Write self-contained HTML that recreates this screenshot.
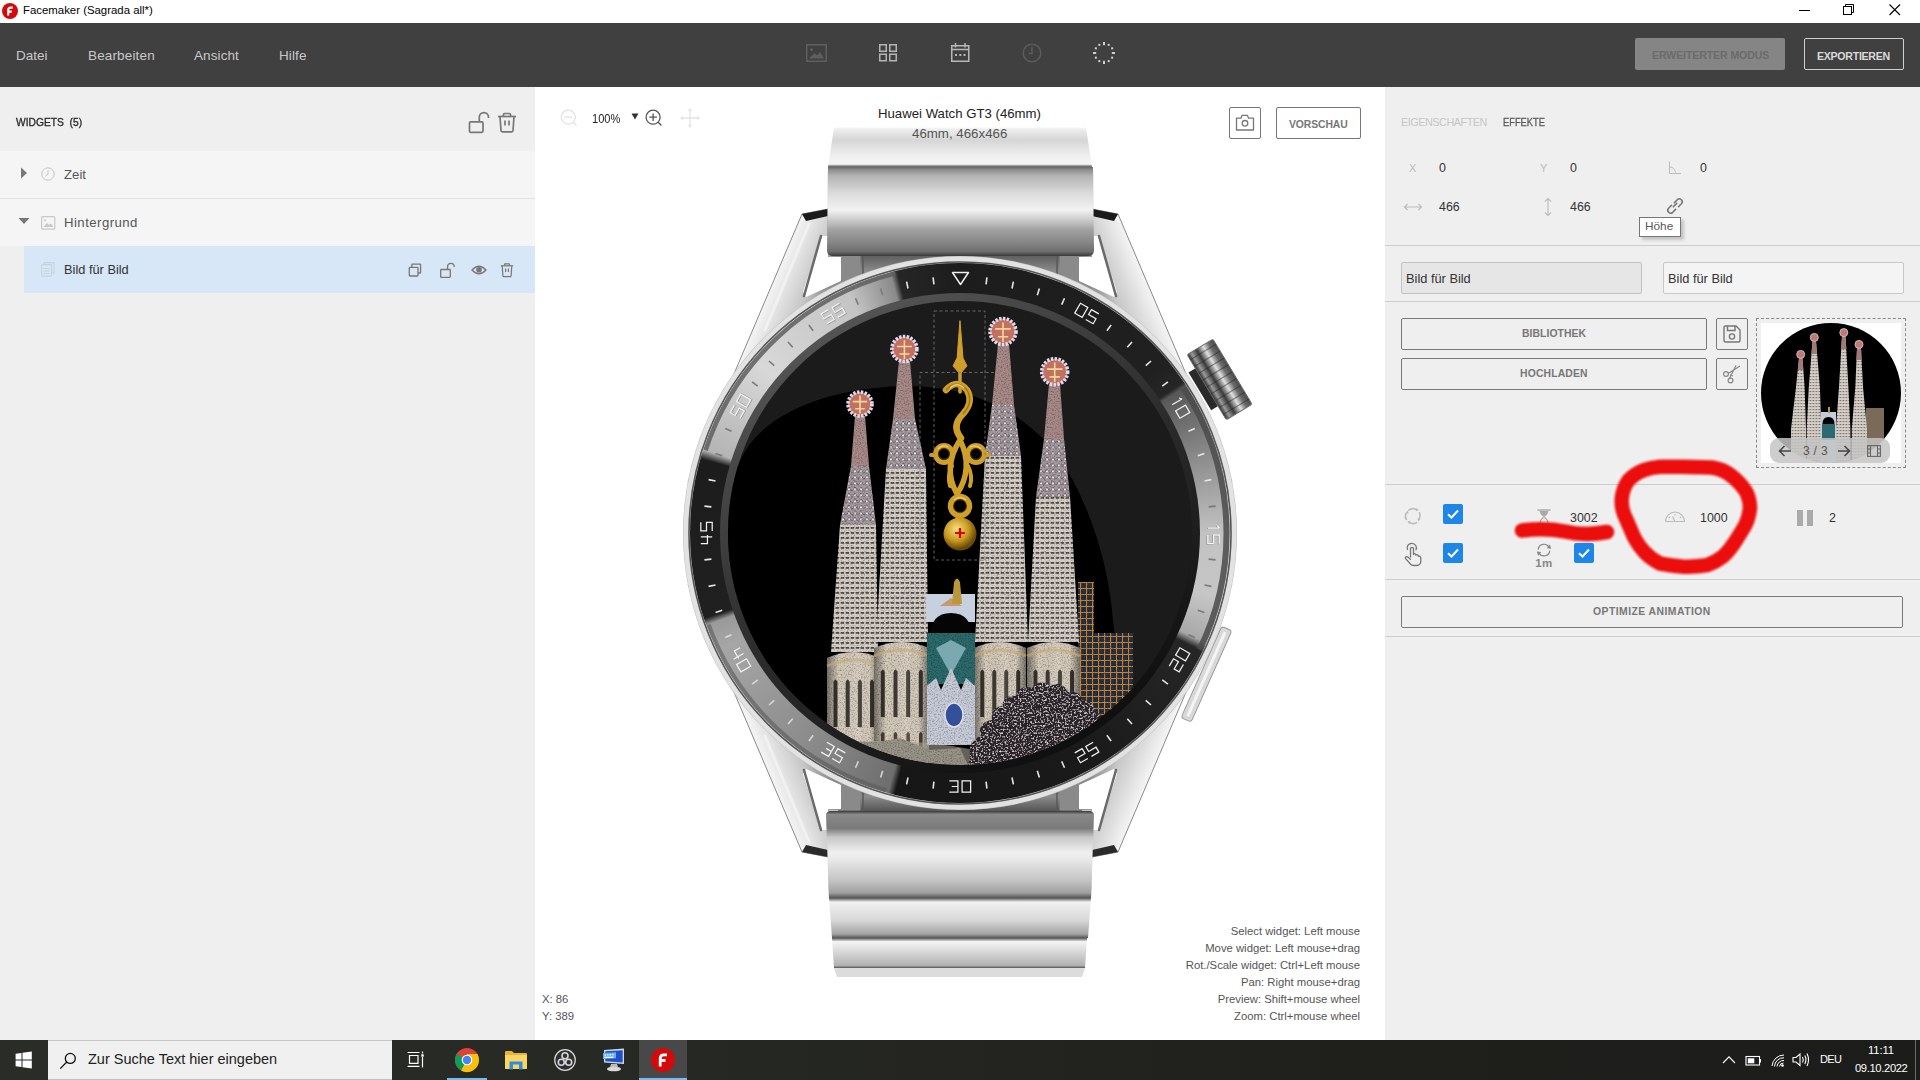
<!DOCTYPE html>
<html><head><meta charset="utf-8">
<style>
*{margin:0;padding:0;box-sizing:border-box}
html,body{width:1920px;height:1080px;overflow:hidden;background:#fff;font-family:"Liberation Sans",sans-serif}
.a{position:absolute}
.t{position:absolute;white-space:nowrap;line-height:1}
svg{position:absolute;overflow:visible}
</style></head><body>
<!-- title bar -->
<div class="a" style="left:0;top:0;width:1920px;height:23px;background:#fff"></div>
<svg style="left:2px;top:3px" width="16" height="16" viewBox="0 0 16 16"><circle cx="8" cy="8" r="8" fill="#d20a0a"/><path d="M6.2 12.6V7Q6.2 4.6 8.6 4.6H10.8M6.2 8.6H9.8" stroke="#fff" stroke-width="2.1" fill="none"/></svg>
<div class="t" style="left:23px;top:5px;font-size:11.4px;color:#000">Facemaker (Sagrada all*)</div>
<svg style="left:1799px;top:10px" width="12" height="2"><rect width="11" height="1" y="0" fill="#000"/></svg>
<svg style="left:1843px;top:4px" width="12" height="12" viewBox="0 0 12 12"><rect x="0.5" y="2.5" width="8" height="8" fill="none" stroke="#000"/><path d="M2.5 2.5V0.5H10.5V8.5H8.5" fill="none" stroke="#000"/></svg>
<svg style="left:1889px;top:4px" width="12" height="12" viewBox="0 0 12 12"><path d="M0.5 0.5L11 11M11 0.5L0.5 11" stroke="#000" stroke-width="1.1"/></svg>

<!-- menu bar -->
<div class="a" style="left:0;top:23px;width:1920px;height:64px;background:#404040"></div>
<div class="t" style="left:16px;top:48.5px;font-size:13.5px;color:#c9c9c9">Datei</div>
<div class="t" style="left:88px;top:48.5px;font-size:13.5px;color:#c9c9c9;letter-spacing:0.15px">Bearbeiten</div>
<div class="t" style="left:194px;top:48.5px;font-size:13.5px;color:#c9c9c9;letter-spacing:0.1px">Ansicht</div>
<div class="t" style="left:279px;top:48.5px;font-size:13.5px;color:#c9c9c9;letter-spacing:0.1px">Hilfe</div>
<!-- toolbar icons -->
<svg style="left:806px;top:44px" width="21" height="18" viewBox="0 0 21 18"><rect x="0.75" y="0.75" width="19.5" height="16.5" fill="none" stroke="#5e5e5e" stroke-width="1.5"/><circle cx="5.5" cy="5.5" r="1.5" fill="#5e5e5e"/><path d="M3 14.5L8.5 9L11 11.5L14 8L18 14.5Z" fill="#5e5e5e"/></svg>
<svg style="left:879px;top:44px" width="19" height="18" viewBox="0 0 19 18"><g fill="none" stroke="#b4b4b4" stroke-width="1.5"><rect x="0.75" y="0.75" width="6.5" height="6.5"/><rect x="10.75" y="0.75" width="6.5" height="6.5"/><rect x="0.75" y="10.25" width="6.5" height="6.5"/><rect x="10.75" y="10.25" width="6.5" height="6.5"/></g></svg>
<svg style="left:951px;top:43px" width="19" height="19" viewBox="0 0 19 19"><g fill="none" stroke="#b8b8b8" stroke-width="1.5"><rect x="0.75" y="2.75" width="17" height="15.5"/><path d="M4.5 0V4.5M14 0V4.5M0.75 6.5H17.75"/></g><g fill="#b8b8b8"><rect x="4" y="11" width="2" height="2"/><rect x="8.3" y="11" width="2" height="2"/><rect x="12.5" y="11" width="2" height="2"/></g></svg>
<svg style="left:1022px;top:43px" width="20" height="20" viewBox="0 0 20 20"><circle cx="10" cy="10" r="8.8" fill="none" stroke="#5c5c5c" stroke-width="1.5"/><path d="M10 4V10.5H6.5" fill="none" stroke="#5c5c5c" stroke-width="1.5"/></svg>
<svg style="left:1093px;top:42px" width="22" height="22" viewBox="0 0 22 22"><g fill="#cfcfcf"><rect x="10.00" y="-0.00" width="2.0" height="3.2"/><rect x="14.70" y="1.86" width="2.0" height="2.0"/><rect x="18.14" y="5.30" width="2.0" height="2.0"/><rect x="18.80" y="10.00" width="3.2" height="2.0"/><rect x="18.14" y="14.70" width="2.0" height="2.0"/><rect x="14.70" y="18.14" width="2.0" height="2.0"/><rect x="10.00" y="18.80" width="2.0" height="3.2"/><rect x="5.30" y="18.14" width="2.0" height="2.0"/><rect x="1.86" y="14.70" width="2.0" height="2.0"/><rect x="-0.00" y="10.00" width="3.2" height="2.0"/><rect x="1.86" y="5.30" width="2.0" height="2.0"/><rect x="5.30" y="1.86" width="2.0" height="2.0"/></g></svg>
<!-- header buttons -->
<div class="a" style="left:1635px;top:38px;width:150px;height:32px;background:#858585;border-radius:2px"></div>
<div class="t" style="left:1652px;top:50px;font-size:10.6px;font-weight:bold;color:#6b6b6b;letter-spacing:-0.12px">ERWEITERTER MODUS</div>
<div class="a" style="left:1804px;top:38px;width:100px;height:32px;border:1.5px solid #cfcfcf;border-radius:2px"></div>
<div class="t" style="left:1817px;top:51px;font-size:10.6px;font-weight:bold;color:#dadada;letter-spacing:-0.28px">EXPORTIEREN</div>

<!-- panels -->
<div class="a" style="left:0;top:87px;width:535px;height:953px;background:#efefef"></div>
<div class="a" style="left:535px;top:87px;width:850px;height:953px;background:#fff"></div>
<div class="a" style="left:1385px;top:87px;width:535px;height:953px;background:#efefef"></div>

<!-- left panel -->
<div class="t" style="left:16px;top:116.5px;font-size:11.8px;color:#2a2a2a;-webkit-text-stroke:0.35px #2a2a2a;transform:scaleX(0.87);transform-origin:0 0">WIDGETS&nbsp;&nbsp;(5)</div>
<svg style="left:467px;top:111px" width="24" height="24" viewBox="0 0 24 24"><g fill="none" stroke="#777" stroke-width="1.7"><rect x="2.5" y="10.8" width="13.5" height="10.5" rx="1.2"/><path d="M12.3 10.8V6.2A4.6 4.6 0 0 1 21.5 6.2V7"/></g></svg>
<svg style="left:497px;top:112px" width="20" height="22" viewBox="0 0 20 22"><g fill="none" stroke="#777" stroke-width="1.7"><path d="M1 4.5H19"/><path d="M6.5 4.5V2.5Q6.5 1.5 7.5 1.5H12.5Q13.5 1.5 13.5 2.5V4.5"/><path d="M3 4.5L4 18.5Q4 19.8 5.3 19.8H14.7Q16 19.8 16 18.5L17 4.5"/><path d="M8 8.5V13.5M12 8.5V13.5"/></g></svg>
<div class="a" style="left:0;top:151px;width:535px;height:47px;background:#f5f5f5"></div>
<div class="a" style="left:0;top:198px;width:535px;height:1px;background:#e2e2e2"></div>
<div class="a" style="left:0;top:199px;width:535px;height:47px;background:#f5f5f5"></div>
<div class="a" style="left:24px;top:246px;width:511px;height:47px;background:#d7e7f7"></div>
<svg style="left:20px;top:167px" width="8" height="12" viewBox="0 0 8 12"><path d="M1 0.5L7 6L1 11.5Z" fill="#777"/></svg>
<svg style="left:18px;top:217px" width="12" height="8" viewBox="0 0 12 8"><path d="M0.5 1L11.5 1L6 7Z" fill="#777"/></svg>
<svg style="left:41px;top:167px" width="14" height="14" viewBox="0 0 14 14"><circle cx="7" cy="7" r="6.2" fill="none" stroke="#c4c4c4" stroke-width="1"/><path d="M7 3V7.3L4.5 9" fill="none" stroke="#c4c4c4" stroke-width="1"/></svg>
<svg style="left:41px;top:216px" width="15" height="14" viewBox="0 0 15 14"><rect x="0.6" y="0.6" width="13.2" height="12.6" rx="1" fill="none" stroke="#c8c8c8" stroke-width="1.2"/><path d="M2.5 11L6 7L8 9L10 7.5L12.5 11Z" fill="#c8c8c8"/><circle cx="4" cy="4.2" r="1" fill="#c8c8c8"/></svg>
<svg style="left:41px;top:262px" width="15" height="15" viewBox="0 0 15 15"><g fill="none" stroke="#c8d3de" stroke-width="1.1"><rect x="0.6" y="2.6" width="10" height="11.5" rx="0.8"/><path d="M3 2.6V0.6H13V11H10.6"/><path d="M5.5 0.6V-0M2.5 6.5H8.5M2.5 9H8.5M2.5 11.5H8.5"/></g></svg>
<div class="t" style="left:64px;top:168px;font-size:13.2px;color:#555">Zeit</div>
<div class="t" style="left:64px;top:216px;font-size:13.2px;color:#555;letter-spacing:0.45px">Hintergrund</div>
<div class="t" style="left:64px;top:263.5px;font-size:12.8px;color:#333">Bild für Bild</div>
<!-- row icons -->
<svg style="left:408px;top:263px" width="14" height="14" viewBox="0 0 14 14"><g fill="none" stroke="#777" stroke-width="1.3"><rect x="1.3" y="4.3" width="8.7" height="8.7" rx="0.8"/><path d="M3.8 4.3V1.8Q3.8 1.1 4.5 1.1H12Q12.6 1.1 12.6 1.8V9.3Q12.6 10 12 10H10"/></g></svg>
<svg style="left:439px;top:262px" width="17" height="17" viewBox="0 0 17 17"><g fill="none" stroke="#777" stroke-width="1.3"><rect x="1.7" y="7.5" width="9.6" height="7.9" rx="0.8"/><path d="M8.6 7.5V4.6A3.3 3.3 0 0 1 15.2 4.6V5"/></g></svg>
<svg style="left:471px;top:264px" width="16" height="12" viewBox="0 0 16 12"><path d="M1 6Q8 -1.5 15 6Q8 13.5 1 6Z" fill="none" stroke="#777" stroke-width="1.3"/><circle cx="8" cy="5.8" r="2.8" fill="#777"/></svg>
<svg style="left:500px;top:263px" width="14" height="15" viewBox="0 0 14 15"><g fill="none" stroke="#777" stroke-width="1.2"><path d="M0.8 2.8H13.2"/><path d="M4.5 2.8V1.4Q4.5 0.8 5.1 0.8H8.9Q9.5 0.8 9.5 1.4V2.8"/><path d="M2.2 2.8L2.9 12.8Q2.9 13.6 3.7 13.6H10.3Q11.1 13.6 11.1 12.8L11.8 2.8"/><path d="M5.6 5.5V9M8.4 5.5V9"/></g></svg>

<!-- canvas tools -->
<svg style="left:559px;top:108px" width="20" height="20" viewBox="0 0 20 20"><g fill="none" stroke="#e2e2e2" stroke-width="1.3"><circle cx="9.3" cy="9.2" r="7"/><path d="M5.5 9.2H13M14.3 14.3L17.5 17.5"/></g></svg>
<div class="t" style="left:592px;top:112.5px;font-size:12.3px;color:#222;transform:scaleX(0.9);transform-origin:0 0">100%</div>
<svg style="left:631px;top:113px" width="8" height="7" viewBox="0 0 8 7"><path d="M0.5 0.5H7.5L4 6.5Z" fill="#333"/></svg>
<svg style="left:644px;top:108px" width="20" height="20" viewBox="0 0 20 20"><g fill="none" stroke="#555" stroke-width="1.3"><circle cx="9.1" cy="9.2" r="7"/><path d="M5.3 9.2H12.9M9.1 5.4V13M14.2 14.3L17.4 17.5"/></g></svg>
<svg style="left:680px;top:108px" width="20" height="20" viewBox="0 0 20 20"><g fill="none" stroke="#e4e4e4" stroke-width="1.3"><path d="M10 1V19M1 10H19"/></g><g fill="#e4e4e4"><path d="M10 0L12.2 3H7.8Z"/><path d="M10 20L12.2 17H7.8Z"/><path d="M0 10L3 7.8V12.2Z"/><path d="M20 10L17 7.8V12.2Z"/></g></svg>
<div class="a" style="left:1229px;top:107px;width:32px;height:32px;border:1.3px solid #777;border-radius:2px"></div>
<svg style="left:1235px;top:113px" width="20" height="20" viewBox="0 0 20 20"><g fill="none" stroke="#777" stroke-width="1.3"><path d="M1.5 5.2H6L7 2.4H12.5L13.5 5.2H18.5V17H1.5Z" stroke-linejoin="round"/><circle cx="10" cy="10.3" r="2.8"/></g></svg>
<div class="a" style="left:1276px;top:107px;width:85px;height:32px;border:1.3px solid #777;border-radius:2px"></div>
<div class="t" style="left:1289px;top:119.5px;font-size:10.4px;font-weight:bold;color:#777;letter-spacing:-0.1px">VORSCHAU</div>
<!-- help text -->
<div class="a" style="left:1060px;top:922.5px;width:300px;text-align:right;font-size:11.3px;line-height:17px;color:#555">Select widget: Left mouse<br>Move widget: Left mouse+drag<br>Rot./Scale widget: Ctrl+Left mouse<br>Pan: Right mouse+drag<br>Preview: Shift+mouse wheel<br>Zoom: Ctrl+mouse wheel</div>
<div class="a" style="left:542px;top:990.5px;font-size:11.3px;line-height:17px;color:#555">X: 86<br>Y: 389</div>

<svg style="left:0;top:0" width="1920" height="1080" viewBox="0 0 1920 1080">
<defs>
<linearGradient id="bt1" x1="0" y1="0" x2="0" y2="1">
 <stop offset="0" stop-color="#f6f6f6"/><stop offset="0.06" stop-color="#ececec"/><stop offset="0.32" stop-color="#d6d6d6"/><stop offset="0.7" stop-color="#eeeeee"/><stop offset="0.93" stop-color="#f6f6f6"/><stop offset="0.965" stop-color="#9a9a9a"/><stop offset="1" stop-color="#5a5a5a"/></linearGradient>
<linearGradient id="bt2" x1="0" y1="0" x2="0" y2="1">
 <stop offset="0" stop-color="#6a6a6a"/><stop offset="0.03" stop-color="#8c8c8c"/><stop offset="0.1" stop-color="#b4b4b4"/><stop offset="0.2" stop-color="#c8c8c8"/><stop offset="0.3" stop-color="#dcdcdc"/><stop offset="0.48" stop-color="#f2f2f2"/><stop offset="0.58" stop-color="#d0d0d0"/><stop offset="0.71" stop-color="#a0a0a0"/><stop offset="0.83" stop-color="#8a8a8a"/><stop offset="0.95" stop-color="#6e6e6e"/><stop offset="1" stop-color="#3a3a3a"/></linearGradient>
<linearGradient id="bb1" x1="0" y1="0" x2="0" y2="1">
 <stop offset="0" stop-color="#3a3a3a"/><stop offset="0.04" stop-color="#8a8a8a"/><stop offset="0.2" stop-color="#7a7a7a"/><stop offset="0.3" stop-color="#c8c8c8"/><stop offset="0.48" stop-color="#f0f0f0"/><stop offset="0.56" stop-color="#e8e8e8"/><stop offset="0.8" stop-color="#c4c4c4"/><stop offset="0.94" stop-color="#a0a0a0"/><stop offset="1" stop-color="#555555"/></linearGradient>
<linearGradient id="bb2" x1="0" y1="0" x2="0" y2="1">
 <stop offset="0" stop-color="#555555"/><stop offset="0.1" stop-color="#f0f0f0"/><stop offset="0.55" stop-color="#d8d8d8"/><stop offset="0.9" stop-color="#a4a4a4"/><stop offset="1" stop-color="#555555"/></linearGradient>
<linearGradient id="bb3" x1="0" y1="0" x2="0" y2="1">
 <stop offset="0" stop-color="#555555"/><stop offset="0.12" stop-color="#f4f4f4"/><stop offset="0.7" stop-color="#c4c4c4"/><stop offset="0.92" stop-color="#b0b0b0"/><stop offset="1" stop-color="#555555"/></linearGradient>
<linearGradient id="link" x1="0" y1="0" x2="0" y2="1">
 <stop offset="0" stop-color="#5a5a5a"/><stop offset="0.45" stop-color="#8c8c8c"/><stop offset="1" stop-color="#4a4a4a"/></linearGradient>
<linearGradient id="lugTL" gradientUnits="userSpaceOnUse" x1="745" y1="350" x2="795" y2="371"><stop offset="0" stop-color="#f4f4f4"/><stop offset="0.2" stop-color="#e6e6e6"/><stop offset="0.65" stop-color="#c6c6c6"/><stop offset="1" stop-color="#8a8a8a"/></linearGradient>
<linearGradient id="lugTR" gradientUnits="userSpaceOnUse" x1="1175" y1="350" x2="1125" y2="371"><stop offset="0" stop-color="#f4f4f4"/><stop offset="0.2" stop-color="#e6e6e6"/><stop offset="0.65" stop-color="#c6c6c6"/><stop offset="1" stop-color="#8a8a8a"/></linearGradient>
<linearGradient id="lugBL" gradientUnits="userSpaceOnUse" x1="745" y1="716" x2="795" y2="695"><stop offset="0" stop-color="#f4f4f4"/><stop offset="0.2" stop-color="#e6e6e6"/><stop offset="0.65" stop-color="#c6c6c6"/><stop offset="1" stop-color="#8a8a8a"/></linearGradient>
<linearGradient id="lugBR" gradientUnits="userSpaceOnUse" x1="1175" y1="716" x2="1125" y2="695"><stop offset="0" stop-color="#f4f4f4"/><stop offset="0.2" stop-color="#e6e6e6"/><stop offset="0.65" stop-color="#c6c6c6"/><stop offset="1" stop-color="#8a8a8a"/></linearGradient>
<radialGradient id="caseg" cx="0.5" cy="0.5" r="0.5">
 <stop offset="0.9" stop-color="#c8c8c8"/><stop offset="0.97" stop-color="#ededed"/><stop offset="1" stop-color="#bdbdbd"/></radialGradient>
<pattern id="brush" width="3" height="40" patternUnits="userSpaceOnUse"><rect width="1" height="40" fill="#000" opacity="0.035"/></pattern>
<clipPath id="canvclip"><rect x="535" y="87" width="850" height="953"/></clipPath>
</defs>
<g clip-path="url(#canvclip)">
<rect x="840" y="254" width="240" height="40" fill="url(#link)"/>
<rect x="838" y="782" width="244" height="32" fill="url(#link)"/>
<path d="M863 256V300M1057 256V300M863 770V814M1057 770V814" stroke="#5a5a5a" stroke-width="1.5"/>
<path d="M834 127.5H1086L1092 167H828Z" fill="url(#bt1)"/>
<path d="M828 167H1093L1094 250Q1094 256 1088 256H833Q827 256 827 250Z" fill="url(#bt2)"/>
<path d="M826 815Q826 811 832 811H1088Q1094 811 1094 815L1091 898H829Z" fill="url(#bb1)"/>
<path d="M829 898H1091L1088 938H832Z" fill="url(#bb2)"/>
<path d="M832 938H1087L1085 968H834Z" fill="url(#bb3)"/>
<path d="M834 968H1085L1082 977H837Z" fill="#dcdcdc"/>
<path d="M802 214 L828 209 L828 256 L860 256 L860 300 L760 420 L688 482Z" fill="url(#lugTL)" stroke="#8a8a8a" stroke-width="1"/>
<path d="M821 236 L828 236 L828 257 L841 257 L841 281 L806 297 L803 292Z" fill="#fff"/>
<path d="M1118 214 L1092 209 L1092 256 L1060 256 L1060 300 L1160 420 L1232 482Z" fill="url(#lugTR)" stroke="#8a8a8a" stroke-width="1"/>
<path d="M1099 236 L1092 236 L1092 257 L1079 257 L1079 281 L1114 297 L1117 292Z" fill="#fff"/>
<path d="M802 852 L828 857 L828 810 L860 810 L860 766 L760 646 L688 584Z" fill="url(#lugBL)" stroke="#8a8a8a" stroke-width="1"/>
<path d="M821 830 L828 830 L828 809 L841 809 L841 785 L806 769 L803 774Z" fill="#fff"/>
<path d="M1118 852 L1092 857 L1092 810 L1060 810 L1060 766 L1160 646 L1232 584Z" fill="url(#lugBR)" stroke="#8a8a8a" stroke-width="1"/>
<path d="M1099 830 L1092 830 L1092 809 L1079 809 L1079 785 L1114 769 L1117 774Z" fill="#fff"/>
<g fill="none" stroke-linecap="round"><path d="M821 236L804 296" stroke="#6a6a6a" stroke-width="2.5"/><path d="M1099 236L1116 296" stroke="#6a6a6a" stroke-width="2.5"/><path d="M821 830L804 770" stroke="#6a6a6a" stroke-width="2.5"/><path d="M1099 830L1116 770" stroke="#6a6a6a" stroke-width="2.5"/><path d="M809 224L765 330" stroke="#f4f4f4" stroke-width="3" opacity="0.8"/><path d="M809 842L765 736" stroke="#f4f4f4" stroke-width="3" opacity="0.8"/></g>
<path d="M802 214L828 209V216L806 221Z" fill="#1a1a1a"/><path d="M1118 214L1092 209V216L1114 221Z" fill="#1a1a1a"/>
<path d="M802 852L828 857V850L806 845Z" fill="#2a2a2a"/><path d="M1118 852L1092 857V850L1114 845Z" fill="#2a2a2a"/>
<path d="M828 167H1093L1094 250Q1094 256 1088 256H833Q827 256 827 250Z" fill="url(#bt2)"/>
<path d="M826 815Q826 811 832 811H1088Q1094 811 1094 815L1091 898H829Z" fill="url(#bb1)"/>
<g transform="translate(1217 381) rotate(-31)"><defs><linearGradient id="crg" x1="0" y1="0" x2="1" y2="0"><stop offset="0" stop-color="#2a2a2a"/><stop offset="0.15" stop-color="#9a9a9a"/><stop offset="0.35" stop-color="#3a3a3a"/><stop offset="0.6" stop-color="#e0e0e0"/><stop offset="0.8" stop-color="#6a6a6a"/><stop offset="1" stop-color="#4a4a4a"/></linearGradient></defs><rect x="-20" y="-22" width="10" height="44" fill="#2a2a2a"/><rect x="-12" y="-38" width="30" height="76" rx="2" fill="url(#crg)" stroke="#6a6a6a" stroke-width="1"/><path d="M-12 -32H18M-12 -24H18M-12 -16H18M-12 -8H18M-12 0H18M-12 8H18M-12 16H18M-12 24H18M-12 32H18" stroke="#222" stroke-width="1.2" opacity="0.45"/></g>
<g transform="translate(1206 674) rotate(24)"><rect x="-5" y="-50" width="11" height="100" rx="3" fill="#d8d8d8" stroke="#9a9a9a" stroke-width="1"/><rect x="-1" y="-46" width="3" height="92" fill="#f4f4f4"/></g>
<circle cx="960" cy="533" r="277" fill="url(#caseg)"/>
<circle cx="960" cy="533" r="274" fill="none" stroke="#e2e2e2" stroke-width="5"/><circle cx="960" cy="533" r="271" fill="none" stroke="#555" stroke-width="1.6"/>
</g></svg>
<div class="a" style="left:690px;top:263px;width:540px;height:540px;border-radius:50%;background:conic-gradient(from 0deg,#1c1c1c 0deg,#202020 50deg,#262626 56deg,#585858 57deg,#8a8a8a 72deg,#c2c2c2 90deg,#c6c6c6 104deg,#a8a8a8 114deg,#262626 116deg,#1a1a1a 150deg,#161616 194deg,#6e6e6e 195.5deg,#8a8a8a 215deg,#a6a6a6 244deg,#9a9a9a 250deg,#202020 251.5deg,#1c1c1c 286deg,#b4b4b4 288deg,#d8d8d8 310deg,#c4c4c4 335deg,#8a8a8a 345deg,#262626 346.5deg,#1c1c1c 360deg)"></div>
<svg style="left:0;top:0" width="1920" height="1080" viewBox="0 0 1920 1080">
<defs>
<linearGradient id="ring" x1="0.2" y1="0" x2="0.8" y2="1">
 <stop offset="0" stop-color="#5a5a5a"/><stop offset="0.45" stop-color="#303030"/><stop offset="1" stop-color="#0a0a0a"/></linearGradient>
<clipPath id="face"><circle cx="960" cy="533" r="232"/></clipPath>
<pattern id="win" width="6" height="6" patternUnits="userSpaceOnUse"><rect width="6" height="6" fill="#d0c8c0"/><rect x="1" y="2.5" width="3.5" height="1.6" fill="#4a4242"/></pattern>
<pattern id="louv" width="5" height="5" patternUnits="userSpaceOnUse"><rect width="5" height="5" fill="#d6d0c8"/><rect x="0.7" y="2.1" width="3.4" height="1.6" fill="#4a4242"/></pattern><pattern id="spiky" width="6" height="6" patternUnits="userSpaceOnUse"><rect width="6" height="6" fill="#a89ca0"/><circle cx="3" cy="3" r="1.3" fill="#e8e8f4"/><path d="M0 5.5L3 1L6 5.5" stroke="#706468" stroke-width="0.8" fill="none"/></pattern>
<pattern id="tower" width="13" height="44" patternUnits="userSpaceOnUse" x="2" y="6"><rect width="13" height="44" fill="#d4cabb"/><rect x="5" y="6" width="3" height="28" rx="1.5" fill="#4a4440"/></pattern>
<pattern id="tree" width="5" height="5" patternUnits="userSpaceOnUse"><rect width="5" height="5" fill="#3a3238"/><circle cx="1.5" cy="1.5" r="1.3" fill="#d8d0d8"/><circle cx="3.8" cy="3.6" r="1" fill="#a8a0a8"/></pattern>
<pattern id="scaf" width="6" height="6" patternUnits="userSpaceOnUse"><rect width="6" height="6" fill="#2a3040"/><path d="M0 0.5H6M0.5 0V6" stroke="#c8883a" stroke-width="1.2"/></pattern>
<filter id="tex" x="0" y="0" width="1" height="1"><feTurbulence type="fractalNoise" baseFrequency="0.7" numOctaves="2" seed="5" result="n"/><feColorMatrix in="n" type="matrix" values="0 0 0 0 0  0 0 0 0 0  0 0 0 0 0  1.4 0 0 0 -0.6" result="na"/><feComposite in="na" in2="SourceGraphic" operator="in" result="nb"/><feMerge><feMergeNode in="SourceGraphic"/><feMergeNode in="nb"/></feMerge></filter>
<linearGradient id="cyl" x1="0" y1="0" x2="1" y2="0"><stop offset="0" stop-color="#000" stop-opacity="0.45"/><stop offset="0.22" stop-color="#000" stop-opacity="0"/><stop offset="0.6" stop-color="#fff" stop-opacity="0.1"/><stop offset="0.8" stop-color="#000" stop-opacity="0"/><stop offset="1" stop-color="#000" stop-opacity="0.45"/></linearGradient>
<filter id="speck" x="0" y="0" width="1" height="1"><feTurbulence type="fractalNoise" baseFrequency="0.55" numOctaves="3" seed="11" result="n"/><feColorMatrix in="n" type="matrix" values="0 0 0 0 0.86  0 0 0 0 0.84  0 0 0 0 0.88  2.8 0 0 0 -1.45" result="na"/><feComposite in="na" in2="SourceGraphic" operator="in" result="nb"/><feMerge><feMergeNode in="SourceGraphic"/><feMergeNode in="nb"/></feMerge></filter>
<radialGradient id="ball" cx="0.4" cy="0.35" r="0.6"><stop offset="0" stop-color="#f8e080"/><stop offset="0.6" stop-color="#c89820"/><stop offset="1" stop-color="#6a4a08"/></radialGradient>
<linearGradient id="spireg" x1="0" y1="0" x2="0" y2="1"><stop offset="0" stop-color="#7a5050" stop-opacity="0.6"/><stop offset="0.3" stop-color="#8a6a6a" stop-opacity="0.45"/><stop offset="0.55" stop-color="#9a8a8a" stop-opacity="0.15"/><stop offset="0.75" stop-color="#b0a8a0" stop-opacity="0"/></linearGradient>
</defs>
<path d="M1183.5 387.9A266.5 266.5 0 0 1 1199.5 649.8" fill="none" stroke="#4a4a4a" stroke-width="6" opacity="0.85"/>
<path d="M705.6 450.3A267.5 267.5 0 0 1 895.3 273.4" fill="none" stroke="#5e5e5e" stroke-width="4.5" opacity="0.85"/>
<path d="M886.3 790.1A267.5 267.5 0 0 1 708.6 624.5" fill="none" stroke="#5a5a5a" stroke-width="4" opacity="0.6"/>
<circle cx="960" cy="533" r="240" fill="url(#ring)"/>
<circle cx="960" cy="533" r="232" fill="#1b1b1b"/>
<g clip-path="url(#face)">
<path d="M738 466C758 412 830 389 900 386C980 384 1040 420 1070 475C1095 520 1108 570 1112 610C1115 650 1125 680 1140 700L1220 720V820H700V466Z" fill="#000"/>
<path d="M1078 582H1094V760H1078Z" fill="url(#scaf)" filter="url(#tex)"/><path d="M1090 633H1133V716H1090Z" fill="url(#scaf)" filter="url(#tex)"/>
<path d="M827 658Q853.5 646 880 658V780H827Z" fill="#d6ccbc" filter="url(#tex)"/>
<path d="M833.5 727V682Q835.5 677 837.5 682V727Z" fill="#3a3430"/>
<path d="M833.7 782V744Q835.5 740 837.3 744V782Z" fill="#4a4038"/>
<path d="M845.7 727V682Q847.7 677 849.7 682V727Z" fill="#3a3430"/>
<path d="M845.9 782V744Q847.7 740 849.5 744V782Z" fill="#4a4038"/>
<path d="M857.9 727V682Q859.9 677 861.9 682V727Z" fill="#3a3430"/>
<path d="M858.1 782V744Q859.9 740 861.7 744V782Z" fill="#4a4038"/>
<path d="M870.0 727V682Q872.0 677 874.0 682V727Z" fill="#3a3430"/>
<path d="M870.2 782V744Q872.0 740 873.8 744V782Z" fill="#4a4038"/>
<path d="M827 658Q853.5 646 880 658V780H827Z" fill="url(#cyl)"/>
<path d="M827 666Q853.5 654 880 666" fill="none" stroke="#c8a870" stroke-width="3" opacity="0.6"/>
<path d="M840 525 L876 525 L878 652 L831 652Z" fill="url(#louv)" filter="url(#tex)"/>
<path d="M851 466 L869 466 L876 525 L840 525Z" fill="url(#spiky)" filter="url(#tex)"/>
<path d="M855 416 L865 416 L869 466 L851 466Z" fill="#a88a88" filter="url(#tex)"/>
<circle cx="860" cy="404" r="12" fill="#c27060" stroke="#dcdcf4" stroke-width="3.6" stroke-dasharray="2.4 1.4"/>
<path d="M852.8 401.6L867.2 401.6M860 395.6L860 413.6M855.2 408.8L864.8 408.8" stroke="#f0d8a0" stroke-width="1.6"/>
<path d="M874 648Q901.5 636 929 648V780H874Z" fill="#d6ccbc" filter="url(#tex)"/>
<path d="M880.8 717V672Q882.8 667 884.8 672V717Z" fill="#3a3430"/>
<path d="M881.0 772V734Q882.8 730 884.6 734V772Z" fill="#4a4038"/>
<path d="M893.5 717V672Q895.5 667 897.5 672V717Z" fill="#3a3430"/>
<path d="M893.7 772V734Q895.5 730 897.2 734V772Z" fill="#4a4038"/>
<path d="M906.1 717V672Q908.1 667 910.1 672V717Z" fill="#3a3430"/>
<path d="M906.3 772V734Q908.1 730 909.9 734V772Z" fill="#4a4038"/>
<path d="M918.8 717V672Q920.8 667 922.8 672V717Z" fill="#3a3430"/>
<path d="M919.0 772V734Q920.8 730 922.5 734V772Z" fill="#4a4038"/>
<path d="M874 648Q901.5 636 929 648V780H874Z" fill="url(#cyl)"/>
<path d="M874 656Q901.5 644 929 656" fill="none" stroke="#c8a870" stroke-width="3" opacity="0.6"/>
<path d="M886 469 L926 469 L928 642 L876 642Z" fill="url(#louv)" filter="url(#tex)"/>
<path d="M893 419 L915 419 L926 469 L886 469Z" fill="url(#spiky)" filter="url(#tex)"/>
<path d="M899 361 L910 361 L915 419 L893 419Z" fill="#a88a88" filter="url(#tex)"/>
<circle cx="904.4" cy="349" r="12.5" fill="#c27060" stroke="#dcdcf4" stroke-width="3.6" stroke-dasharray="2.4 1.4"/>
<path d="M896.9 346.5L911.9 346.5M904.4 340.25L904.4 359M899.4 354L909.4 354" stroke="#f0d8a0" stroke-width="1.6"/>
<path d="M974 648Q1000 636 1026 648V780H974Z" fill="#d6ccbc" filter="url(#tex)"/>
<path d="M980.3 717V672Q982.3 667 984.3 672V717Z" fill="#3a3430"/>
<path d="M980.5 772V734Q982.3 730 984.1 734V772Z" fill="#4a4038"/>
<path d="M992.3 717V672Q994.3 667 996.3 672V717Z" fill="#3a3430"/>
<path d="M992.5 772V734Q994.3 730 996.1 734V772Z" fill="#4a4038"/>
<path d="M1004.2 717V672Q1006.2 667 1008.2 672V717Z" fill="#3a3430"/>
<path d="M1004.4 772V734Q1006.2 730 1008.0 734V772Z" fill="#4a4038"/>
<path d="M1016.2 717V672Q1018.2 667 1020.2 672V717Z" fill="#3a3430"/>
<path d="M1016.4 772V734Q1018.2 730 1020.0 734V772Z" fill="#4a4038"/>
<path d="M974 648Q1000 636 1026 648V780H974Z" fill="url(#cyl)"/>
<path d="M974 656Q1000 644 1026 656" fill="none" stroke="#c8a870" stroke-width="3" opacity="0.6"/>
<path d="M985 456 L1021 456 L1028 642 L975 642Z" fill="url(#louv)" filter="url(#tex)"/>
<path d="M992 405 L1014 405 L1021 456 L985 456Z" fill="url(#spiky)" filter="url(#tex)"/>
<path d="M998 344 L1009 344 L1014 405 L992 405Z" fill="#a88a88" filter="url(#tex)"/>
<circle cx="1003" cy="331.5" r="13" fill="#c27060" stroke="#dcdcf4" stroke-width="3.6" stroke-dasharray="2.4 1.4"/>
<path d="M995.2 328.9L1010.8 328.9M1003 322.4L1003 341.9M997.8 336.7L1008.2 336.7" stroke="#f0d8a0" stroke-width="1.6"/>
<path d="M1027 648Q1053.5 636 1080 648V780H1027Z" fill="#d6ccbc" filter="url(#tex)"/>
<path d="M1033.5 717V672Q1035.5 667 1037.5 672V717Z" fill="#3a3430"/>
<path d="M1033.7 772V734Q1035.5 730 1037.3 734V772Z" fill="#4a4038"/>
<path d="M1045.7 717V672Q1047.7 667 1049.7 672V717Z" fill="#3a3430"/>
<path d="M1045.9 772V734Q1047.7 730 1049.5 734V772Z" fill="#4a4038"/>
<path d="M1057.9 717V672Q1059.9 667 1061.9 672V717Z" fill="#3a3430"/>
<path d="M1058.1 772V734Q1059.9 730 1061.7 734V772Z" fill="#4a4038"/>
<path d="M1070.0 717V672Q1072.0 667 1074.0 672V717Z" fill="#3a3430"/>
<path d="M1070.2 772V734Q1072.0 730 1073.8 734V772Z" fill="#4a4038"/>
<path d="M1027 648Q1053.5 636 1080 648V780H1027Z" fill="url(#cyl)"/>
<path d="M1027 656Q1053.5 644 1080 656" fill="none" stroke="#c8a870" stroke-width="3" opacity="0.6"/>
<path d="M1036 497 L1070 497 L1079 642 L1028 642Z" fill="url(#louv)" filter="url(#tex)"/>
<path d="M1044 439 L1064 439 L1070 497 L1036 497Z" fill="url(#spiky)" filter="url(#tex)"/>
<path d="M1049 384 L1060 384 L1064 439 L1044 439Z" fill="#a88a88" filter="url(#tex)"/>
<circle cx="1054.7" cy="371.7" r="13" fill="#c27060" stroke="#dcdcf4" stroke-width="3.6" stroke-dasharray="2.4 1.4"/>
<path d="M1046.9 369.1L1062.5 369.1M1054.7 362.6L1054.7 382.1M1049.5 376.9L1059.9 376.9" stroke="#f0d8a0" stroke-width="1.6"/>
<path d="M826 745Q900 735 975 750V780H826Z" fill="#a8a090" opacity="0.6"/>
<path d="M926 594H975V622H926Z" fill="#c6d0de"/>
<path d="M940 606L951 598L962 606Z" fill="#c89870"/>
<path d="M930 638Q930 613 951 613Q972 613 972 638Z" fill="#050505"/>
<path d="M927 633H975V684H927Z" fill="#2f6a6c" filter="url(#tex)"/>
<path d="M936 648L951 640L966 648L951 675Z" fill="#7aaab0"/>
<path d="M927 686L936 678L941 690L951 668L961 690L966 678L975 686V745H927Z" fill="#c8ccd8" filter="url(#tex)"/>
<ellipse cx="954" cy="715" rx="9" ry="12" fill="#34509a" stroke="#e0e0e8" stroke-width="1.5"/>
<path d="M954 582Q957 575 960 582L962 604H952Z" fill="#b89838"/>
<path d="M966 780L970 756Q968 742 980 736Q978 722 992 720Q990 708 1002 706Q1004 694 1016 696Q1020 684 1032 688Q1040 678 1050 686Q1062 680 1068 692Q1080 690 1082 700Q1094 700 1094 712Q1106 714 1104 726Q1114 732 1108 744Q1118 752 1110 764L1115 780Z" fill="#2a2428" filter="url(#speck)"/>
<path d="M845 740Q870 745 900 738L930 750L960 748L975 780H830Z" fill="#9a9488" filter="url(#tex)"/>
</g>
<g fill="none" stroke="#cf9f2c" stroke-linecap="round" stroke-linejoin="round">
<path d="M960 321L963 358L967 366L960 374L953 366L957 358Z" fill="#cf9f2c" stroke-width="1"/>
<path d="M960 372V392" stroke-width="3.5"/>
<path d="M946 390Q957 378 967 390Q974 402 963 414Q951 426 961 438" stroke-width="6.5"/>
<circle cx="944" cy="454" r="8.5" stroke-width="5"/><circle cx="976" cy="454" r="8.5" stroke-width="5"/>
<path d="M960 440Q942 468 957 494Q974 468 960 440" stroke-width="5.5"/>
<path d="M935 455H931M985 455H989" stroke-width="4"/>
<path d="M952 466Q947 476 950 486M968 466Q973 476 970 486" stroke-width="4"/>
<circle cx="960" cy="506" r="9.5" stroke-width="5.5"/>
<path d="M958 516V522" stroke-width="5"/>
</g>
<g stroke="#6e5008" stroke-width="1.3" fill="none" opacity="0.55"><path d="M946 390Q957 378 967 390Q974 402 963 414"/><circle cx="944" cy="454" r="5.5"/><circle cx="976" cy="454" r="5.5"/><circle cx="960" cy="506" r="6.5"/></g>
<g stroke="#f6dc80" stroke-width="1.4" fill="none" opacity="0.75"><path d="M950 388Q957 381 964 388"/><path d="M938 449Q942 444 948 447"/><path d="M970 447Q976 444 981 449"/><path d="M954 500Q960 495 966 500"/></g>
<circle cx="960" cy="534" r="16.5" fill="url(#ball)"/>
<path d="M955 533H965M960 528V538" stroke="#e00000" stroke-width="2.2"/>
<g fill="none" stroke="#7a7a7a" stroke-width="0.8" stroke-dasharray="3 2.5"><rect x="934" y="311" width="51" height="249"/><path d="M920 560V372.5H1000"/></g>
<path d="M986.1 284.4L986.9 277.4" stroke="#e6e6e6" stroke-width="1.6"/>
<path d="M1012.0 288.5L1013.4 281.6" stroke="#e6e6e6" stroke-width="1.6"/>
<path d="M1037.3 295.2L1039.4 288.6" stroke="#e6e6e6" stroke-width="1.6"/>
<path d="M1061.7 304.6L1064.5 298.2" stroke="#e6e6e6" stroke-width="1.6"/>
<path d="M1106.9 330.7L1111.1 325.1" stroke="#e6e6e6" stroke-width="1.6"/>
<path d="M1127.3 347.2L1132.0 342.0" stroke="#e6e6e6" stroke-width="1.6"/>
<path d="M1145.8 365.7L1151.0 361.0" stroke="#e6e6e6" stroke-width="1.6"/>
<path d="M1162.3 386.1L1167.9 381.9" stroke="#e6e6e6" stroke-width="1.6"/>
<path d="M1188.4 431.3L1194.8 428.5" stroke="#e6e6e6" stroke-width="1.6"/>
<path d="M1197.8 455.7L1204.4 453.6" stroke="#e6e6e6" stroke-width="1.6"/>
<path d="M1204.5 481.0L1211.4 479.6" stroke="#e6e6e6" stroke-width="1.6"/>
<path d="M1208.6 506.9L1215.6 506.1" stroke="#7a7a7a" stroke-width="1.6"/>
<path d="M1208.6 559.1L1215.6 559.9" stroke="#7a7a7a" stroke-width="1.6"/>
<path d="M1204.5 585.0L1211.4 586.4" stroke="#7a7a7a" stroke-width="1.6"/>
<path d="M1197.8 610.3L1204.4 612.4" stroke="#7a7a7a" stroke-width="1.6"/>
<path d="M1188.4 634.7L1194.8 637.5" stroke="#7a7a7a" stroke-width="1.6"/>
<path d="M1162.3 679.9L1167.9 684.1" stroke="#e6e6e6" stroke-width="1.6"/>
<path d="M1145.8 700.3L1151.0 705.0" stroke="#e6e6e6" stroke-width="1.6"/>
<path d="M1127.3 718.8L1132.0 724.0" stroke="#e6e6e6" stroke-width="1.6"/>
<path d="M1106.9 735.3L1111.1 740.9" stroke="#e6e6e6" stroke-width="1.6"/>
<path d="M1061.7 761.4L1064.5 767.8" stroke="#e6e6e6" stroke-width="1.6"/>
<path d="M1037.3 770.8L1039.4 777.4" stroke="#e6e6e6" stroke-width="1.6"/>
<path d="M1012.0 777.5L1013.4 784.4" stroke="#e6e6e6" stroke-width="1.6"/>
<path d="M986.1 781.6L986.9 788.6" stroke="#e6e6e6" stroke-width="1.6"/>
<path d="M933.9 781.6L933.1 788.6" stroke="#e6e6e6" stroke-width="1.6"/>
<path d="M908.0 777.5L906.6 784.4" stroke="#e6e6e6" stroke-width="1.6"/>
<path d="M882.7 770.8L880.6 777.4" stroke="#d8d8d8" stroke-width="1.6"/>
<path d="M858.3 761.4L855.5 767.8" stroke="#d8d8d8" stroke-width="1.6"/>
<path d="M813.1 735.3L808.9 740.9" stroke="#d8d8d8" stroke-width="1.6"/>
<path d="M792.7 718.8L788.0 724.0" stroke="#d8d8d8" stroke-width="1.6"/>
<path d="M774.2 700.3L769.0 705.0" stroke="#d8d8d8" stroke-width="1.6"/>
<path d="M757.7 679.9L752.1 684.1" stroke="#d8d8d8" stroke-width="1.6"/>
<path d="M731.6 634.7L725.2 637.5" stroke="#d8d8d8" stroke-width="1.6"/>
<path d="M722.2 610.3L715.6 612.4" stroke="#e6e6e6" stroke-width="1.6"/>
<path d="M715.5 585.0L708.6 586.4" stroke="#e6e6e6" stroke-width="1.6"/>
<path d="M711.4 559.1L704.4 559.9" stroke="#e6e6e6" stroke-width="1.6"/>
<path d="M711.4 506.9L704.4 506.1" stroke="#e6e6e6" stroke-width="1.6"/>
<path d="M715.5 481.0L708.6 479.6" stroke="#e6e6e6" stroke-width="1.6"/>
<path d="M722.2 455.7L715.6 453.6" stroke="#7a7a7a" stroke-width="1.6"/>
<path d="M731.6 431.3L725.2 428.5" stroke="#7a7a7a" stroke-width="1.6"/>
<path d="M757.7 386.1L752.1 381.9" stroke="#7a7a7a" stroke-width="1.6"/>
<path d="M774.2 365.7L769.0 361.0" stroke="#7a7a7a" stroke-width="1.6"/>
<path d="M792.7 347.2L788.0 342.0" stroke="#7a7a7a" stroke-width="1.6"/>
<path d="M813.1 330.7L808.9 325.1" stroke="#7a7a7a" stroke-width="1.6"/>
<path d="M858.3 304.6L855.5 298.2" stroke="#7a7a7a" stroke-width="1.6"/>
<path d="M882.7 295.2L880.6 288.6" stroke="#7a7a7a" stroke-width="1.6"/>
<path d="M908.0 288.5L906.6 281.6" stroke="#e6e6e6" stroke-width="1.6"/>
<path d="M933.9 284.4L933.1 277.4" stroke="#e6e6e6" stroke-width="1.6"/>
<path d="M952.5 272.5H968.5L960.5 284.5Z" fill="none" stroke="#eee" stroke-width="1.5" stroke-linejoin="round"/>
<g fill="none" stroke-width="1.3" stroke-linejoin="miter">
<g transform="translate(1086.8 313.5) rotate(30) scale(0.95)"><path transform="translate(-11.2 -6)" d="M0 0H9V12H0Z" stroke="#f2f2f2"/><path transform="translate(2.2 -6)" d="M9 0H0V6H9V12H0" stroke="#f2f2f2"/></g>
<g transform="translate(1179.5 406.2) rotate(60) scale(0.95)"><path transform="translate(-11.2 -6)" d="M6 0V12M3.5 2L6 0" stroke="#f4f4f4"/><path transform="translate(2.2 -6)" d="M0 0H9V12H0Z" stroke="#f4f4f4"/></g>
<g transform="translate(1213.5 533.0) rotate(90) scale(0.95)"><path transform="translate(-10.8 -5.2)" d="M6 0V12M3.5 2L6 0" stroke="#6a6a6a" opacity="0.6"/><path transform="translate(-11.2 -6)" d="M6 0V12M3.5 2L6 0" stroke="#f4f4f4"/><path transform="translate(2.8 -5.2)" d="M9 0H0V6H9V12H0" stroke="#6a6a6a" opacity="0.6"/><path transform="translate(2.2 -6)" d="M9 0H0V6H9V12H0" stroke="#f4f4f4"/></g>
<g transform="translate(1179.5 659.8) rotate(-60) scale(0.95)"><path transform="translate(-11.2 -6)" d="M0 0H9V6H0V12H9" stroke="#f2f2f2"/><path transform="translate(2.2 -6)" d="M0 0H9V12H0Z" stroke="#f2f2f2"/></g>
<g transform="translate(1086.8 752.5) rotate(-30) scale(0.95)"><path transform="translate(-11.2 -6)" d="M0 0H9V6H0V12H9" stroke="#f2f2f2"/><path transform="translate(2.2 -6)" d="M9 0H0V6H9V12H0" stroke="#f2f2f2"/></g>
<g transform="translate(960.0 786.5) rotate(0) scale(0.95)"><path transform="translate(-11.2 -6)" d="M0 0H9V12H0M2.5 6H9" stroke="#f2f2f2"/><path transform="translate(2.2 -6)" d="M0 0H9V12H0Z" stroke="#f2f2f2"/></g>
<g transform="translate(833.2 752.5) rotate(30) scale(0.95)"><path transform="translate(-11.2 -6)" d="M0 0H9V12H0M2.5 6H9" stroke="#f2f2f2"/><path transform="translate(2.2 -6)" d="M9 0H0V6H9V12H0" stroke="#f2f2f2"/></g>
<g transform="translate(740.5 659.8) rotate(60) scale(0.95)"><path transform="translate(-11.2 -6)" d="M0 0V7H9M7 0V12" stroke="#f2f2f2"/><path transform="translate(2.2 -6)" d="M0 0H9V12H0Z" stroke="#f2f2f2"/></g>
<g transform="translate(706.5 533.0) rotate(270) scale(0.95)"><path transform="translate(-11.2 -6)" d="M0 0V7H9M7 0V12" stroke="#f2f2f2"/><path transform="translate(2.2 -6)" d="M9 0H0V6H9V12H0" stroke="#f2f2f2"/></g>
<g transform="translate(740.5 406.2) rotate(300) scale(0.95)"><path transform="translate(-10.8 -5.2)" d="M9 0H0V6H9V12H0" stroke="#6a6a6a" opacity="0.6"/><path transform="translate(-11.2 -6)" d="M9 0H0V6H9V12H0" stroke="#f4f4f4"/><path transform="translate(2.8 -5.2)" d="M0 0H9V12H0Z" stroke="#6a6a6a" opacity="0.6"/><path transform="translate(2.2 -6)" d="M0 0H9V12H0Z" stroke="#f4f4f4"/></g>
<g transform="translate(833.2 313.5) rotate(330) scale(0.95)"><path transform="translate(-10.8 -5.2)" d="M9 0H0V6H9V12H0" stroke="#6a6a6a" opacity="0.6"/><path transform="translate(-11.2 -6)" d="M9 0H0V6H9V12H0" stroke="#f4f4f4"/><path transform="translate(2.8 -5.2)" d="M9 0H0V6H9V12H0" stroke="#6a6a6a" opacity="0.6"/><path transform="translate(2.2 -6)" d="M9 0H0V6H9V12H0" stroke="#f4f4f4"/></g>
</g>
</svg>
<div class="t" style="left:878px;top:106.5px;font-size:13.2px;color:#222">Huawei Watch GT3 (46mm)</div>
<div class="t" style="left:912px;top:126.5px;font-size:13.3px;color:#555">46mm, 466x466</div>
<!-- right panel -->
<div class="t" style="left:1401px;top:117px;font-size:10.8px;color:#c6c6c6;letter-spacing:-0.45px">EIGENSCHAFTEN</div>
<div class="t" style="left:1503px;top:117px;font-size:10.9px;color:#5a5a5a;-webkit-text-stroke:0.3px #5a5a5a;transform:scaleX(0.855);transform-origin:0 0">EFFEKTE</div>
<div class="t" style="left:1409px;top:162.5px;font-size:11px;color:#bbb">X</div>
<div class="t" style="left:1439px;top:162px;font-size:12.4px;color:#333">0</div>
<div class="t" style="left:1540px;top:162.5px;font-size:11px;color:#bbb">Y</div>
<div class="t" style="left:1570px;top:162px;font-size:12.4px;color:#333">0</div>
<svg style="left:1668px;top:161px" width="14" height="14" viewBox="0 0 14 14"><path d="M1.5 0.5V12.5H13M1.5 6Q6.5 6 7.5 11.5" fill="none" stroke="#bbb" stroke-width="1"/></svg>
<div class="t" style="left:1700px;top:162px;font-size:12.4px;color:#333">0</div>
<svg style="left:1403px;top:200px" width="20" height="14" viewBox="0 0 20 14"><path d="M1.5 7H18.5M4.5 4L1.5 7L4.5 10M15.5 4L18.5 7L15.5 10" fill="none" stroke="#bbb" stroke-width="1.1"/></svg>
<div class="t" style="left:1439px;top:201px;font-size:12.4px;color:#333">466</div>
<svg style="left:1541px;top:197px" width="14" height="20" viewBox="0 0 14 20"><path d="M7 1.5V18.5M4 4.5L7 1.5L10 4.5M4 15.5L7 18.5L10 15.5" fill="none" stroke="#bbb" stroke-width="1.1"/></svg>
<div class="t" style="left:1570px;top:201px;font-size:12.4px;color:#333">466</div>
<svg style="left:1665px;top:196px" width="20" height="20" viewBox="0 0 20 20"><g fill="none" stroke="#777" stroke-width="1.6" stroke-linecap="round"><path d="M8.3 10.8L11.7 7.4"/><path d="M6.5 9.3L3.6 12.2A2.9 2.9 0 0 0 7.7 16.3L10.6 13.4"/><path d="M9.4 6.6L12.3 3.7A2.9 2.9 0 0 1 16.4 7.8L13.5 10.7"/></g></svg>
<div class="a" style="left:1642px;top:220px;width:42px;height:20px;background:rgba(0,0,0,0.18);filter:blur(1.5px)"></div>
<div class="a" style="left:1639px;top:217px;width:42px;height:20px;background:#fff;border:1px solid #767676"></div>
<div class="t" style="left:1645px;top:221px;font-size:11.8px;color:#575757">Höhe</div>
<div class="a" style="left:1385px;top:245px;width:535px;height:1px;background:#cdcdcd"></div>
<!-- name inputs -->
<div class="a" style="left:1401px;top:262px;width:241px;height:32px;background:#e6e6e6;border:1px solid #c2c2c2;border-radius:2px"></div>
<div class="t" style="left:1406px;top:272.5px;font-size:12.8px;color:#333">Bild für Bild</div>
<div class="a" style="left:1663px;top:262px;width:241px;height:32px;background:#f4f4f4;border:1px solid #c8c8c8;border-radius:2px"></div>
<div class="t" style="left:1668px;top:272.5px;font-size:12.8px;color:#333">Bild für Bild</div>
<div class="a" style="left:1385px;top:301px;width:535px;height:1px;background:#cdcdcd"></div>
<!-- buttons -->
<div class="a" style="left:1401px;top:318px;width:306px;height:32px;border:1.3px solid #7a7a7a;border-radius:2px"></div>
<div class="t" style="left:1522px;top:329px;font-size:10.4px;font-weight:bold;color:#777;letter-spacing:0.05px">BIBLIOTHEK</div>
<div class="a" style="left:1401px;top:358px;width:306px;height:32px;border:1.3px solid #7a7a7a;border-radius:2px"></div>
<div class="t" style="left:1520px;top:369px;font-size:10.4px;font-weight:bold;color:#777;letter-spacing:0.15px">HOCHLADEN</div>
<div class="a" style="left:1716px;top:318px;width:32px;height:32px;border:1.3px solid #7a7a7a;border-radius:2px"></div>
<svg style="left:1722px;top:324px" width="20" height="20" viewBox="0 0 20 20"><g fill="none" stroke="#777" stroke-width="1.4"><path d="M2 3.5Q2 2 3.5 2H14L18 6V16.5Q18 18 16.5 18H3.5Q2 18 2 16.5Z"/><path d="M5.5 2V6.5H13V2"/><circle cx="10" cy="12.5" r="2.6"/></g></svg>
<div class="a" style="left:1716px;top:358px;width:32px;height:32px;border:1.3px solid #7a7a7a;border-radius:2px"></div>
<svg style="left:1721px;top:363px" width="22" height="22" viewBox="0 0 22 22"><g fill="none" stroke="#888" stroke-width="1.2"><circle cx="5" cy="11" r="2.4"/><circle cx="9.5" cy="17.5" r="2.4"/><path d="M7.2 10.5L19 3M8.5 15.3L15 2.5M9 12L12 13"/></g></svg>
<!-- thumbnail -->
<div class="a" style="left:1756px;top:318px;width:150px;height:150px;border:1px dashed #888"></div>
<div class="a" style="left:1761px;top:323px;width:140px;height:140px;background:#fff"></div>

<svg style="left:1761px;top:323px" width="140" height="140" viewBox="1761 323 140 140">
<defs><clipPath id="thc"><circle cx="1831" cy="393" r="70"/></clipPath>
<pattern id="tl" width="3" height="3" patternUnits="userSpaceOnUse"><rect width="3" height="3" fill="#d4cec6"/><rect x="0.5" y="1.2" width="1.8" height="0.9" fill="#6a6060"/></pattern></defs>
<circle cx="1831" cy="393" r="70" fill="#000"/>
<g clip-path="url(#thc)">
<path d="M1866 408H1884V470H1866Z" fill="#7a6a58"/>
<path d="M1799 358L1802.5 358L1804.6 387L1806 429V470H1791V429L1796 387Z" fill="url(#tl)"/>
<path d="M1812.5 341L1816 341L1819.9 387L1821.3 429V470H1806.7V429L1808.8 387Z" fill="url(#tl)"/>
<path d="M1842 336L1845.5 336L1848.4 387L1850.4 429V470H1835.9V429L1839 387Z" fill="url(#tl)"/>
<path d="M1857 348L1861 348L1863 387L1867 429V470H1851.8V429L1855.3 387Z" fill="url(#tl)"/>
<path d="M1799 358L1802.5 358L1803.3 370H1798Z M1812.5 341L1816 341L1817 354H1811.5Z M1842 336L1845.5 336L1846.3 349H1841Z M1857 348L1861 348L1861.6 360H1856.5Z" fill="#a07a78"/>
<path d="M1821 412H1836V470H1821Z" fill="#c4ccd8"/><path d="M1822.5 424Q1822.5 417 1828.5 417Q1834.5 417 1834.5 424Z" fill="#000"/><path d="M1822 424H1835V440H1822Z" fill="#2a6a70"/>
<rect x="1828" y="407" width="2" height="6" fill="#b89838"/>
<circle cx="1800.7" cy="354.4" r="4" fill="#c07a70" stroke="#c8b8d0" stroke-width="1"/><circle cx="1814.3" cy="337.4" r="4" fill="#c07a70" stroke="#c8b8d0" stroke-width="1"/><circle cx="1843.8" cy="332.6" r="4" fill="#c07a70" stroke="#c8b8d0" stroke-width="1"/><circle cx="1859" cy="344.4" r="4" fill="#c07a70" stroke="#c8b8d0" stroke-width="1"/>
</g></svg>

<!-- thumb nav bar -->
<div class="a" style="left:1770px;top:438px;width:120px;height:25px;border-radius:9px;background:rgba(196,196,196,0.85)"></div>
<svg style="left:1778px;top:444px" width="14" height="14" viewBox="0 0 14 14"><path d="M13 7H1.8M6.5 2L1.5 7L6.5 12" fill="none" stroke="#444" stroke-width="1.5"/></svg>
<div class="t" style="left:1803px;top:445px;font-size:12px;color:#555;letter-spacing:0.3px">3 / 3</div>
<svg style="left:1837px;top:444px" width="14" height="14" viewBox="0 0 14 14"><path d="M1 7H12.2M7.5 2L12.5 7L7.5 12" fill="none" stroke="#444" stroke-width="1.5"/></svg>
<svg style="left:1867px;top:445px" width="14" height="12" viewBox="0 0 14 12"><g fill="none" stroke="#666" stroke-width="1.1"><rect x="0.6" y="0.6" width="12.8" height="10.8"/><path d="M3.5 0.6V11.4M10.5 0.6V11.4M0.6 4H3.5M0.6 8H3.5M10.5 4H13.4M10.5 8H13.4"/></g></svg>
<div class="a" style="left:1385px;top:484px;width:535px;height:1px;background:#cdcdcd"></div>
<!-- animation row -->
<svg style="left:1404px;top:507px" width="18" height="18" viewBox="0 0 18 18"><g fill="none" stroke="#bdbdbd" stroke-width="1.6"><path d="M4.2 3.6A7.2 7.2 0 0 1 12.5 2.6"/><path d="M15.2 5.2A7.2 7.2 0 0 1 14.6 12.6"/><path d="M13.2 15.4A7.2 7.2 0 0 1 5.2 15.2"/><path d="M2.6 13A7.2 7.2 0 0 1 2.2 6"/></g><g fill="#bdbdbd"><path d="M12.5 0.8L14.8 3.6L11.6 4.2Z"/><path d="M16.8 12L14.2 14.6L13.4 11.4Z"/><path d="M5.4 17.2L3.2 14.4L6.4 13.8Z"/><path d="M1.2 6.2L3.6 3.4L4.6 6.6Z"/></g></svg>
<div class="a" style="left:1443px;top:504px;width:20px;height:20px;background:#1e86e6;border-radius:2px"></div>
<svg style="left:1443px;top:504px" width="20" height="20" viewBox="0 0 20 20"><path d="M5 10.2L8.5 13.5L15 6.5" fill="none" stroke="#fff" stroke-width="2"/></svg>
<svg style="left:1403px;top:543px" width="22" height="24" viewBox="0 0 22 24"><g fill="none" stroke="#777" stroke-width="1.3" stroke-linejoin="round" stroke-linecap="round"><path d="M4.5 6.5A4.6 4.6 0 1 1 13 6.8"/><path d="M7.5 14V5.8Q7.5 4.3 9 4.3Q10.5 4.3 10.5 5.8V11.5"/><path d="M10.5 10.6Q12.6 10.2 12.9 12"/><path d="M12.9 11.6Q15 11.2 15.3 13"/><path d="M15.3 13Q17.8 12.8 17.8 15V18Q17.8 22.5 13.5 22.5H11Q8.6 22.5 7.2 20.8L2.6 15.6Q1.8 14.4 3 13.8Q4.2 13.3 5.4 14.4L7.5 16.4"/></g></svg>
<div class="a" style="left:1443px;top:543px;width:20px;height:20px;background:#1e86e6;border-radius:2px"></div>
<svg style="left:1443px;top:543px" width="20" height="20" viewBox="0 0 20 20"><path d="M5 10.2L8.5 13.5L15 6.5" fill="none" stroke="#fff" stroke-width="2"/></svg>
<svg style="left:1537px;top:509px" width="14" height="16" viewBox="0 0 14 16"><g fill="#aaa"><rect x="0.5" y="0.3" width="13" height="1.4"/><rect x="0.5" y="14.3" width="13" height="1.4"/><path d="M2.6 1.7H11.4Q11.2 5.6 7 8Q2.8 5.6 2.6 1.7Z"/></g><path d="M3 14.3Q3.2 10.4 7 8Q10.8 10.4 11 14.3" fill="none" stroke="#aaa" stroke-width="1.2"/></svg>
<div class="t" style="left:1570px;top:512px;font-size:12.4px;color:#333">3002</div>
<svg style="left:1664px;top:510px" width="22" height="14" viewBox="0 0 22 14"><g fill="none" stroke="#bbb" stroke-width="1.1"><path d="M1.5 11.5A9.5 9.5 0 0 1 20.5 11.5H1.5"/><path d="M11 11.5L8.5 6.5M5 7L6 8M11 4V5.5M17 7L16 8"/></g></svg>
<div class="t" style="left:1700px;top:512px;font-size:12.4px;color:#333">1000</div>
<div class="a" style="left:1797px;top:510px;width:6px;height:16px;background:#aaa"></div>
<div class="a" style="left:1807px;top:510px;width:6px;height:16px;background:#aaa"></div>
<div class="t" style="left:1829px;top:512px;font-size:12.4px;color:#333">2</div>
<svg style="left:1534px;top:542px" width="20" height="26" viewBox="0 0 20 26"><g fill="none" stroke="#888" stroke-width="1.2"><path d="M4.2 7.6A5.8 5.8 0 0 1 15 5.2"/><path d="M15.8 8.6A5.8 5.8 0 0 1 5 11"/></g><g fill="#888"><path d="M15.8 2.4L17.2 6.8L12.8 6.2Z"/><path d="M4.2 13.8L2.8 9.4L7.2 10Z"/></g><text x="10" y="24.8" font-size="11.5" font-weight="bold" font-family="Liberation Sans" fill="#888" text-anchor="middle" letter-spacing="0.5">1m</text></svg>
<div class="a" style="left:1574px;top:543px;width:20px;height:20px;background:#1e86e6;border-radius:2px"></div>
<svg style="left:1574px;top:543px" width="20" height="20" viewBox="0 0 20 20"><path d="M5 10.2L8.5 13.5L15 6.5" fill="none" stroke="#fff" stroke-width="2"/></svg>
<div class="a" style="left:1385px;top:579px;width:535px;height:1px;background:#cdcdcd"></div>
<div class="a" style="left:1401px;top:596px;width:502px;height:32px;border:1.3px solid #7a7a7a;border-radius:2px"></div>
<div class="t" style="left:1593px;top:607px;font-size:10.4px;font-weight:bold;color:#777;letter-spacing:0.45px">OPTIMIZE ANIMATION</div>
<div class="a" style="left:1385px;top:636px;width:535px;height:1px;background:#cdcdcd"></div>
<!-- red annotations -->
<svg style="left:0;top:0" width="1920" height="1080" viewBox="0 0 1920 1080"><defs><filter id="rb" x="-10%" y="-10%" width="120%" height="120%"><feGaussianBlur stdDeviation="0.9"/></filter></defs><g fill="none" stroke="#ec1010" stroke-linecap="round" stroke-linejoin="round" filter="url(#rb)"><path d="M1522 530.5Q1545 527.5 1565 531.5Q1585 536 1607 532" stroke-width="14.5"/><path d="M1680.8 466.8L1711.5 467.5Q1722 469 1729 474Q1740 482 1746.5 492.3Q1750 500 1750 508.3Q1749 518 1745 525.8L1736 540.4Q1730 550 1723 556.5Q1716 562 1707 565.2Q1696 567 1683.8 566.7Q1672 566 1660.4 563.7Q1651 559 1644.4 552Q1638 545 1634.2 537.5L1624 514.2Q1621 506 1621.8 498.1Q1623 488 1628.3 480.6Q1634 474 1643 470.4Q1651 467.5 1660.4 466.8Z" stroke-width="14.5"/></g></svg>

<!-- taskbar -->
<div class="a" style="left:0;top:1040px;width:1920px;height:40px;background:linear-gradient(90deg,#2a2c27 0%,#272924 30%,#1f201c 70%,#1c1d1a 100%)"></div>
<svg style="left:15px;top:1051px" width="18" height="18" viewBox="0 0 18 18"><g fill="#fff"><path d="M0.6 2.8L6.5 2V8.5H0.6Z"/><path d="M7.5 1.8L16.8 0.6V8.5H7.5Z"/><path d="M0.6 9.5H6.5V16L0.6 15.2Z"/><path d="M7.5 9.5H16.8V17.4L7.5 16.2Z"/></g></svg>
<div class="a" style="left:48px;top:1040px;width:344px;height:40px;background:#f0f0f0;border-top:1px solid #c6c6c6;border-bottom:1px solid #c0c0c0"></div>
<svg style="left:59px;top:1051px" width="20" height="20" viewBox="0 0 20 20"><g fill="none" stroke="#111" stroke-width="1.3"><circle cx="11.3" cy="7.4" r="5"/><path d="M7.8 11L1.2 17.6"/></g></svg>
<div class="t" style="left:88px;top:1052px;font-size:14.5px;color:#222">Zur Suche Text hier eingeben</div>
<svg style="left:407px;top:1051px" width="18" height="17" viewBox="0 0 18 17"><g fill="none" stroke="#fff" stroke-width="1.2"><path d="M0.6 1.5H12.5M0.6 15.3H12.5M2.5 4.5H11V12.3H2.5Z"/><path d="M15.5 0.5V2.5M15.5 6V16.5"/></g><rect x="14.3" y="3.3" width="2.4" height="2.4" fill="#fff"/></svg>
<!-- chrome -->
<svg style="left:455px;top:1048px" width="24" height="24" viewBox="0 0 24 24"><circle cx="12" cy="12" r="12" fill="#db4437"/><path d="M12 12L1.6 6A12 12 0 0 0 6 22.4Z" fill="#0f9d58"/><path d="M12 12L6 22.4A12 12 0 0 0 24 12Z" fill="#f4c20d"/><path d="M12 12H24A12 12 0 0 0 22.4 6H12Z" fill="#f4c20d"/><circle cx="12" cy="12" r="5.3" fill="#fff"/><circle cx="12" cy="12" r="4.2" fill="#4285f4"/></svg>
<div class="a" style="left:447px;top:1078px;width:40px;height:2px;background:#7fb9e8"></div>
<!-- folder -->
<svg style="left:505px;top:1051px" width="22" height="19" viewBox="0 0 22 19"><path d="M0 1Q0 0 1 0H7L9 2H21Q22 2 22 3V17Q22 18 21 18H1Q0 18 0 17Z" fill="#e8b33a"/><path d="M0 4H22V17Q22 18 21 18H1Q0 18 0 17Z" fill="#fcd462"/><path d="M4.5 10.5H17.5V18.5H14V13.5H8V18.5H4.5Z" fill="#2b8ee0"/></svg>
<!-- obs -->
<svg style="left:554px;top:1049px" width="22" height="22" viewBox="0 0 22 22"><circle cx="11" cy="11" r="10.3" fill="#302e31" stroke="#d8d8d8" stroke-width="1.2"/><g fill="none" stroke="#d8d8d8" stroke-width="1.6"><circle cx="11" cy="6.8" r="3"/><circle cx="7.3" cy="13.2" r="3"/><circle cx="14.7" cy="13.2" r="3"/></g></svg>
<!-- monitor -->
<svg style="left:602px;top:1048px" width="24" height="24" viewBox="0 0 24 24"><path d="M2 2L22 0.5V16L2 14.5Z" fill="#cfd8e8"/><path d="M3.3 3.3L20.7 2.2V14.5L3.3 13.3Z" fill="#2050c8"/><path d="M1 5H14V11H1Z" fill="#66aef0" transform="skewY(-3)"/><g fill="#fff"><rect x="2.5" y="6.5" width="1.5" height="1.2"/><rect x="5" y="6.3" width="1.5" height="1.2"/><rect x="7.5" y="6.2" width="1.5" height="1.2"/><rect x="10" y="6" width="1.5" height="1.2"/><rect x="2.5" y="8.7" width="9" height="1.2"/></g><path d="M9 16H15L16 19H8Z" fill="#bbb"/><ellipse cx="12" cy="21" rx="7" ry="2.3" fill="#d8d8d8"/></svg>
<!-- facemaker active -->
<div class="a" style="left:639px;top:1040px;width:48px;height:40px;background:#484848"></div>
<div class="a" style="left:639px;top:1078px;width:48px;height:2px;background:#7fb9e8"></div>
<svg style="left:651px;top:1048px" width="24" height="24" viewBox="0 0 24 24"><circle cx="12" cy="12" r="12" fill="#d40a0a"/><path d="M9.2 18.5V10.5Q9.2 6.8 12.8 6.8H16M9.2 12.5H14.5" stroke="#fff" stroke-width="2.8" fill="none"/></svg>
<!-- tray -->
<svg style="left:1722px;top:1055px" width="14" height="9" viewBox="0 0 14 9"><path d="M1 8L7 1.8L13 8" fill="none" stroke="#fff" stroke-width="1.1"/></svg>
<svg style="left:1745px;top:1055px" width="17" height="11" viewBox="0 0 17 11"><rect x="1" y="1.5" width="13.5" height="8.5" fill="none" stroke="#fff" stroke-width="1.1"/><rect x="2.8" y="3.3" width="6.5" height="5" fill="#fff"/><rect x="14.5" y="4" width="1.5" height="3.5" fill="#fff"/></svg>
<svg style="left:1771px;top:1054px" width="15" height="14" viewBox="0 0 15 14"><g fill="none" stroke="#fff" stroke-width="1"><path d="M1 12A12 12 0 0 1 13 1"/><path d="M3.5 12.5A9 9 0 0 1 13 3.8"/><path d="M6 12.5A6.5 6.5 0 0 1 13 6.5"/><path d="M8.5 12.5A4 4 0 0 1 12.5 9"/></g><circle cx="11.5" cy="11.5" r="1.3" fill="#fff"/></svg>
<svg style="left:1792px;top:1052px" width="18" height="16" viewBox="0 0 18 16"><g fill="none" stroke="#fff" stroke-width="1.1"><path d="M1 5.5H4L8 2V13.5L4 10H1Z"/><path d="M10.5 5Q12 7.8 10.5 10.5M12.8 3.5Q15 7.8 12.8 12M15 1.5Q18 7.8 15 14"/></g></svg>
<div class="t" style="left:1820px;top:1053.5px;font-size:11px;color:#fff;letter-spacing:-0.6px">DEU</div>
<div class="t" style="left:1868px;top:1045px;font-size:11.2px;color:#fff;letter-spacing:-0.1px">11:11</div>
<div class="t" style="left:1855px;top:1062.5px;font-size:11.2px;color:#fff;letter-spacing:-0.35px">09.10.2022</div>
<div class="a" style="left:1915px;top:1040px;width:1px;height:40px;background:#6a6a6a"></div>

</body></html>
